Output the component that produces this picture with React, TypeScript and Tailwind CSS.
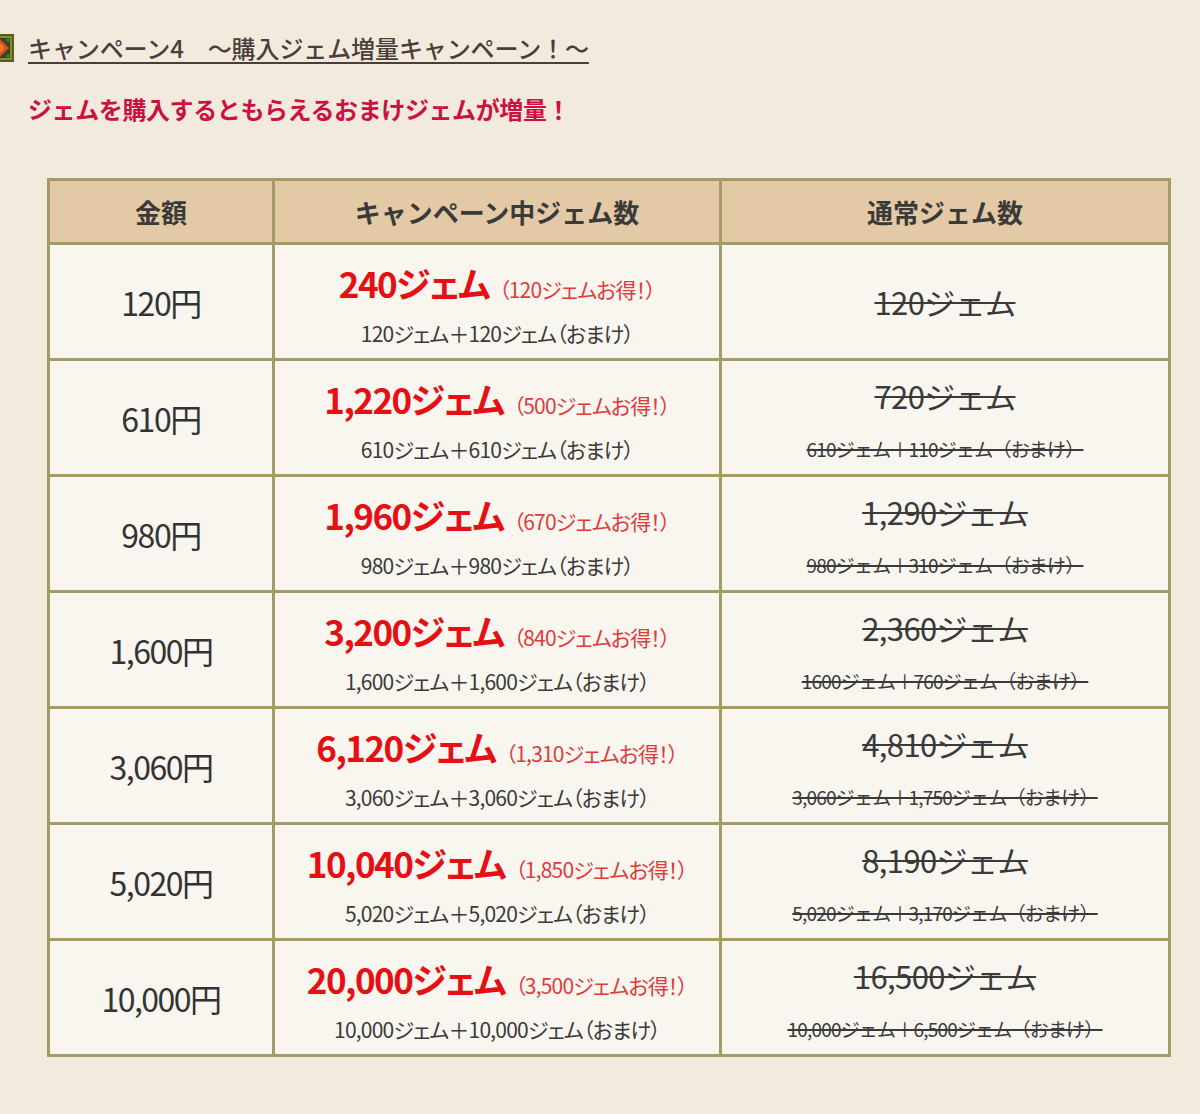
const rows = [
  { yen: '120円', gem: '240ジェム', gain: '（120ジェムお得！）', detail: '120ジェム＋120ジェム（おまけ）', normal: '120ジェム', normalDetail: '' },
  { yen: '610円', gem: '1,220ジェム', gain: '（500ジェムお得！）', detail: '610ジェム＋610ジェム（おまけ）', normal: '720ジェム', normalDetail: '610ジェム＋110ジェム（おまけ）' },
  { yen: '980円', gem: '1,960ジェム', gain: '（670ジェムお得！）', detail: '980ジェム＋980ジェム（おまけ）', normal: '1,290ジェム', normalDetail: '980ジェム＋310ジェム（おまけ）' },
  { yen: '1,600円', gem: '3,200ジェム', gain: '（840ジェムお得！）', detail: '1,600ジェム＋1,600ジェム（おまけ）', normal: '2,360ジェム', normalDetail: '1600ジェム＋760ジェム（おまけ）' },
  { yen: '3,060円', gem: '6,120ジェム', gain: '（1,310ジェムお得！）', detail: '3,060ジェム＋3,060ジェム（おまけ）', normal: '4,810ジェム', normalDetail: '3,060ジェム＋1,750ジェム（おまけ）' },
  { yen: '5,020円', gem: '10,040ジェム', gain: '（1,850ジェムお得！）', detail: '5,020ジェム＋5,020ジェム（おまけ）', normal: '8,190ジェム', normalDetail: '5,020ジェム＋3,170ジェム（おまけ）' },
  { yen: '10,000円', gem: '20,000ジェム', gain: '（3,500ジェムお得！）', detail: '10,000ジェム＋10,000ジェム（おまけ）', normal: '16,500ジェム', normalDetail: '10,000ジェム＋6,500ジェム（おまけ）' },
];

function TitleIcon() {
  return (
    <svg width="28" height="28" viewBox="0 0 28 28" className="ml-[-14px] shrink-0">
      <rect x="0" y="0" width="28" height="28" fill="#5a5a1e" />
      <rect x="2" y="2" width="24" height="24" fill="#8a8a32" />
      <rect x="4" y="4" width="20" height="20" fill="#2f4a1c" />
      <polygon points="14,5 23,14 14,23 5,14" fill="#e0451c" />
      <polygon points="14,9 19,14 14,19 9,14" fill="#f07a2a" />
      <circle cx="22" cy="6" r="1.2" fill="#3fa36a" />
      <circle cx="22" cy="22" r="1.2" fill="#3fa36a" />
      <circle cx="6" cy="6" r="1.2" fill="#3fa36a" />
      <circle cx="6" cy="22" r="1.2" fill="#3fa36a" />
    </svg>
  );
}

export default function App() {
  const cell = 'border-[3px] border-[#a39b68] bg-[#f9f6ef] text-center align-middle';
  return (
    <div className="min-h-[1114px] w-[1200px] bg-[#f2eadd] font-['Noto_Sans_CJK_JP',sans-serif] text-[#3b3b3b] overflow-hidden">
      <div className="flex items-center gap-[14px] pt-[31px]">
        <TitleIcon />
        <h1 className="text-[24px] leading-[34px] font-medium text-[#4a3e3a] underline decoration-[2px] underline-offset-[4px] tracking-[-0.1px]">
          キャンペーン4　～購入ジェム増量キャンペーン！～
        </h1>
      </div>
      <p className="pl-[28px] mt-[27px] text-[24px] leading-[34px] font-bold text-[#cc1141] tracking-[-0.4px]">
        ジェムを購入するともらえるおまけジェムが増量！
      </p>
      <div className="pl-[47px] pt-[52px]">
        <table className="border-collapse w-[1121px] table-fixed">
          <colgroup>
            <col className="w-[225px]" />
            <col className="w-[447px]" />
            <col className="w-[449px]" />
          </colgroup>
          <thead>
            <tr className="h-[64px]">
              {['金額', 'キャンペーン中ジェム数', '通常ジェム数'].map((h) => (
                <th key={h} className="border-[3px] border-[#a39b68] bg-[#e3c9a5] text-[26px] font-bold text-[#3a3a3a]">
                  {h}
                </th>
              ))}
            </tr>
          </thead>
          <tbody>
            {rows.map((r) => (
              <tr key={r.yen} className="h-[116px]">
                <td className={cell}>
                  <span className="text-[32px] tracking-[-1.5px] text-[#333] [font-feature-settings:'palt']">{r.yen}</span>
                </td>
                <td className={cell}>
                  <div className="flex flex-col items-center gap-[18px] pt-[8px] [font-feature-settings:'palt']">
                    <div className="flex items-baseline h-[36px]">
                      <span className="text-[35px] leading-[36px] font-bold text-[#e50f14] tracking-[-1.5px]">{r.gem}</span>
                      <span className="ml-[10px] text-[21px] text-[#e03a3a] tracking-[-0.8px]">{r.gain}</span>
                    </div>
                    <div className="text-[21px] leading-[28px] text-[#3a3a3a] tracking-[-0.8px]">{r.detail}</div>
                  </div>
                </td>
                <td className={cell}>
                  <div className={r.normalDetail ? 'flex flex-col items-center gap-[21px] pt-[6px]' : 'flex flex-col items-center'}>
                    <span className="text-[31px] leading-[36px] text-[#3a3a3a] line-through decoration-[2px] tracking-[-0.6px]">{r.normal}</span>
                    {r.normalDetail && (
                      <span className="text-[19px] leading-[28px] text-[#3a3a3a] line-through decoration-[2px] tracking-[-0.8px]">{r.normalDetail}</span>
                    )}
                  </div>
                </td>
              </tr>
            ))}
          </tbody>
        </table>
      </div>
    </div>
  );
}
